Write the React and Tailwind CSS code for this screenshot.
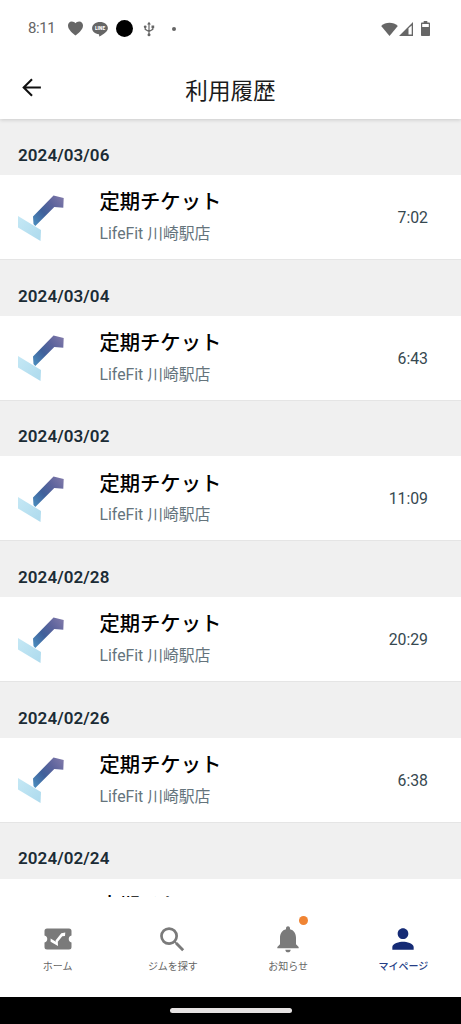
import React from 'react';

const visits = [
  { date: '2024/03/06', time: '7:02' },
  { date: '2024/03/04', time: '6:43' },
  { date: '2024/03/02', time: '11:09' },
  { date: '2024/02/28', time: '20:29' },
  { date: '2024/02/26', time: '6:38' },
  { date: '2024/02/24', time: '' },
];

function StatusBar() {
  return (
    <div className="z-20 flex h-14 shrink-0 items-center bg-white pl-7 pr-[31px] pt-px text-[#666]">
      <span className="w-[27px] whitespace-nowrap text-[15px] leading-none tracking-[-0.4px]">8:11</span>
      <svg className="ml-[13px] h-[15px] w-[15px]" viewBox="0 0 14 14" fill="currentColor">
        <path d="M7 13.600C4.800 11.600 0 8.400 0 4.200 0 2.100 1.400.5 3.600.5 5 .5 6.200 1.200 7 2.200 7.800 1.200 9 .5 10.400 .5 12.600 .5 14 2.100 14 4.200 14 8.400 9.200 11.600 7 13.600Z" />
      </svg>
      <svg className="ml-[9px] h-[16px] w-[16px]" viewBox="0 0 16 16">
        <path d="M8 1C3.600 1 .1 3.700 .1 7.200c0 3.200 2.900 5.500 6.700 6 .6.200.2 1.800.400 2.300 1-.3 8.700-4.200 8.700-8.300C15.900 3.700 12.400 1 8 1Z" fill="#666" />
        <text x="8" y="9.200" textAnchor="middle" fontSize="4.700" fontWeight="900" fontFamily="Roboto, sans-serif" fill="#fff" textLength="10">LINE</text>
      </svg>
      <span className="ml-2 h-[17px] w-[17px] rounded-full bg-black" />
      <svg className="ml-[10px] h-[16px] w-[12px]" viewBox="0 0 12 16" fill="none" stroke="currentColor" strokeWidth="1.200">
        <path d="M6 2.500V13M2.200 6.500v1.800L6 10.500M9.800 6v2.300L6 10.500" />
        <path d="M6 .8 7.900 3.400H4.100Z" fill="currentColor" stroke="none" />
        <circle cx="6" cy="13.700" r="1.500" fill="currentColor" stroke="none" />
        <circle cx="2.200" cy="5.800" r="1.400" fill="currentColor" stroke="none" />
        <path d="M8.500 4.500h2.700v2.700H8.500z" fill="currentColor" stroke="none" />
      </svg>
      <span className="ml-[17px] h-1 w-1 rounded-full bg-[#666]" />
      <svg className="ml-auto h-[14px] w-[17px]" viewBox="0 0 17 14" fill="currentColor">
        <path d="M8.500 14 .2 3.900C2.400 1.900 5.300.7 8.500.7s6.100 1.200 8.300 3.200Z" />
      </svg>
      <svg className="ml-[1px] h-[14px] w-[14px]" viewBox="0 0 14 14">
        <path d="M0 14 14 0V14ZM9.500 6.300V12.600H12.700V3.500Z" fill="currentColor" fillRule="evenodd" />
      </svg>
      <svg className="ml-2 h-[15px] w-[9px]" viewBox="0 0 9 15">
        <path d="M2.700 0h3.600v1.500H8.200a.8.8 0 0 1 .8.8v11.900a.8.8 0 0 1-.8.8H.8a.8.8 0 0 1-.8-.8V2.300a.8.8 0 0 1 .8-.8h1.900ZM1.200 3v3H7.800V3Z" fill="currentColor" fillRule="evenodd" />
      </svg>
    </div>
  );
}

function BrandMark() {
  return (
    <svg className="mt-[2px] h-[47px] w-[47px] shrink-0" viewBox="0 0 47 47">
      <defs>
        <linearGradient id="pale" x1="0" y1="0" x2="1" y2="1">
          <stop offset="0" stopColor="#c5e8f5" />
          <stop offset="1" stopColor="#addaed" />
        </linearGradient>
        <linearGradient id="deep" gradientUnits="userSpaceOnUse" x1="14" y1="29" x2="45" y2="4">
          <stop offset="0" stopColor="#4a8fc0" />
          <stop offset="0.400" stopColor="#40619b" />
          <stop offset="0.700" stopColor="#5c639c" />
          <stop offset="1" stopColor="#7c77a8" />
        </linearGradient>
      </defs>
      <path d="M0 21 23 35 22.500 46 0 32.500Z" fill="url(#pale)" />
      <path d="M15 21.500 35.500.5 45.700 3 45.300 12.700 36.300 12 17.300 31 15.500 29Z" fill="url(#deep)" />
    </svg>
  );
}

function Visit({ date, time }) {
  return (
    <section className="h-[140.7px] shrink-0">
      <h2 className="flex h-[55.7px] items-end bg-[#f0f0f0] pb-[9.2px] pl-[18px] text-[17px] font-semibold leading-[22px] tracking-[0.08px] text-[#1b2c35]">
        {date}
      </h2>
      <div className="flex h-[85px] items-center border-b border-[#e5e5e5] bg-white pl-[18px] pr-[33px]">
        <BrandMark />
        <div className="ml-[34.5px] flex flex-col">
          <span className="text-[20.3px] font-medium leading-7 text-black">定期チケット</span>
          <span className="mt-[5.5px] text-[15.8px] leading-6 text-[#65747c]">LifeFit 川崎駅店</span>
        </div>
        <span className="ml-auto pt-[2px] text-[15.8px] leading-6 text-[#364850]">{time}</span>
      </div>
    </section>
  );
}

function TicketIcon() {
  return (
    <svg className="h-[30px] w-[30px]" viewBox="0 0 30 30">
      <path d="M4 4.500H26a2.500 2.500 0 0 1 2.500 2.500v4.500a3.600 3.600 0 0 0 0 7v4.500a2.500 2.500 0 0 1-2.500 2.500H4a2.500 2.500 0 0 1-2.500-2.500v-4.500a3.600 3.600 0 0 0 0-7V7A2.500 2.500 0 0 1 4 4.500Z" fill="#7a7a7a" />
      <path d="M7.600 14.500 13 17.700 12.500 16.500 18.300 9.200 22.300 8.500 22 12 19.300 12.200 14.800 17.700 15 22 7.600 17.700Z" fill="#fff" />
    </svg>
  );
}

function SearchIcon() {
  return (
    <svg className="h-[33px] w-[33px]" viewBox="0 0 24 24" fill="#7a7a7a">
      <path d="M15.500 14h-.79l-.28-.27A6.471 6.471 0 0 0 16 9.500 6.500 6.500 0 1 0 9.500 16c1.610 0 3.090-.59 4.230-1.570l.27.28v.79l5 4.990L20.490 19l-4.990-5zm-6 0C7.010 14 5 11.990 5 9.500S7.010 5 9.500 5 14 7.010 14 9.500 11.990 14 9.500 14z" />
    </svg>
  );
}

function BellIcon() {
  return (
    <span className="relative flex">
      <svg className="h-[32px] w-[32px]" viewBox="0 0 24 24" fill="#7a7a7a">
        <path d="M12 22c1.100 0 2-.9 2-2h-4c0 1.100.89 2 2 2zm6-6v-5c0-3.070-1.640-5.640-4.500-6.320V4c0-.83-.67-1.500-1.500-1.500s-1.500.67-1.500 1.500v.68C7.630 5.360 6 7.920 6 11v5l-2 2v1h16v-1l-2-2z" />
      </svg>
      <span className="absolute left-[27px] top-[-7px] h-[9px] w-[9px] rounded-full bg-[#f08433]" />
    </span>
  );
}

function PersonIcon() {
  return (
    <svg className="h-[32px] w-[32px]" viewBox="0 0 24 24" fill="#152b75">
      <path d="M12 12c2.210 0 4-1.790 4-4s-1.790-4-4-4-4 1.790-4 4 1.790 4 4 4zm0 2c-2.670 0-8 1.340-8 4v2h16v-2c0-2.660-5.330-4-8-4z" />
    </svg>
  );
}

function Tab({ label, active, children }) {
  return (
    <div className="flex flex-1 flex-col items-center pt-[26px]">
      <div className="flex h-8 items-center">{children}</div>
      <span className={`mt-[4px] text-[10px] leading-4 ${active ? 'font-medium text-[#253e86]' : 'font-normal text-[#666]'}`}>{label}</span>
    </div>
  );
}

export default function App() {
  return (
    <div className="flex h-[1024px] w-[461px] flex-col overflow-hidden bg-white font-[Roboto,'Noto_Sans_CJK_JP',sans-serif]">
      <StatusBar />
      <header className="z-10 grid h-[63.4px] shrink-0 grid-cols-[64px_1fr_64px] items-center bg-white shadow-[0_1px_4px_rgba(0,0,0,0.16)]">
        <svg className="ml-[19px] h-[25px] w-[25px]" viewBox="0 0 24 24" fill="none" stroke="#111" strokeWidth="2">
          <path d="M21 12H5M12.500 4 4.500 12l8 8" />
        </svg>
        <h1 className="pt-[9px] text-center text-[22.6px] leading-8 text-[#1b1b1b]">利用履歴</h1>
      </header>
      <main className="flex min-h-0 flex-1 flex-col overflow-hidden">
        {visits.map((visit) => (
          <Visit key={visit.date} {...visit} />
        ))}
      </main>
      <nav className="flex h-[100px] shrink-0 bg-white">
        <Tab label="ホーム"><TicketIcon /></Tab>
        <Tab label="ジムを探す"><SearchIcon /></Tab>
        <Tab label="お知らせ"><BellIcon /></Tab>
        <Tab label="マイページ" active><PersonIcon /></Tab>
      </nav>
      <div className="flex h-[27px] shrink-0 items-center justify-center bg-black">
        <span className="h-[5px] w-[122px] rounded-full bg-[#e6e3e3]" />
      </div>
    </div>
  );
}
